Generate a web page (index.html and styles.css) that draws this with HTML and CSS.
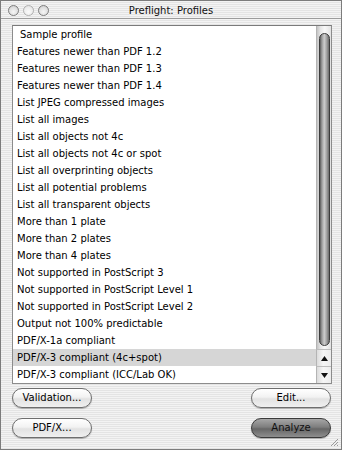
FILE: index.html
```html
<!DOCTYPE html>
<html>
<head>
<meta charset="utf-8">
<link rel="stylesheet" href="styles.css">
</head>
<body>
<div class="window">
  <div class="titlebar">
    <div class="lights">
      <span class="light"></span>
      <span class="light light-mid"></span>
      <span class="light"></span>
    </div>
    <div class="title">Preflight: Profiles</div>
    <div></div>
  </div>
  <div class="content">
    <div class="listbox">
      <ul class="list">
        <li class="row row-first">Sample profile</li>
        <li class="row">Features newer than PDF 1.2</li>
        <li class="row">Features newer than PDF 1.3</li>
        <li class="row">Features newer than PDF 1.4</li>
        <li class="row">List JPEG compressed images</li>
        <li class="row">List all images</li>
        <li class="row">List all objects not 4c</li>
        <li class="row">List all objects not 4c or spot</li>
        <li class="row">List all overprinting objects</li>
        <li class="row">List all potential problems</li>
        <li class="row">List all transparent objects</li>
        <li class="row">More than 1 plate</li>
        <li class="row">More than 2 plates</li>
        <li class="row">More than 4 plates</li>
        <li class="row">Not supported in PostScript 3</li>
        <li class="row">Not supported in PostScript Level 1</li>
        <li class="row">Not supported in PostScript Level 2</li>
        <li class="row">Output not 100% predictable</li>
        <li class="row">PDF/X-1a compliant</li>
        <li class="row row-selected">PDF/X-3 compliant (4c+spot)</li>
        <li class="row">PDF/X-3 compliant (ICC/Lab OK)</li>
      </ul>
      <div class="scrollbar">
        <div class="track"><div class="thumb"></div></div>
        <div class="arrow arrow-up">
          <svg width="7" height="5" viewBox="0 0 7 5"><polygon points="3.5,0 7,5 0,5" fill="#111"/></svg>
        </div>
        <div class="arrow arrow-down">
          <svg width="7" height="5" viewBox="0 0 7 5"><polygon points="0,0 7,0 3.5,5" fill="#111"/></svg>
        </div>
      </div>
    </div>
    <div class="buttons">
      <div class="col">
        <div class="btn">Validation...</div>
        <div class="btn">PDF/X...</div>
      </div>
      <div class="col">
        <div class="btn">Edit...</div>
        <div class="btn btn-default">Analyze</div>
      </div>
    </div>
  </div>
  <svg class="grip" width="10" height="10" viewBox="0 0 10 10">
    <line x1="9" y1="2" x2="2" y2="9" stroke="#9a9a9a" stroke-width="1"/>
    <line x1="9" y1="5" x2="5" y2="9" stroke="#9a9a9a" stroke-width="1"/>
    <line x1="9" y1="8" x2="8" y2="9" stroke="#9a9a9a" stroke-width="1"/>
  </svg>
</div>
</body>
</html>
```
FILE: styles.css
```css
html, body {
  margin: 0;
  padding: 0;
  background: #ffffff;
}

body {
  font-family: "DejaVu Sans", "Liberation Sans", sans-serif;
  font-size: 10px;
  color: #000;
}

.window {
  position: relative;
  width: 342px;
  height: 450px;
  box-sizing: border-box;
  border: 1px solid #7c7c7c;
  background: repeating-linear-gradient(180deg, #f3f3f3 0, #f3f3f3 1px, #e4e4e4 1px, #e4e4e4 2px);
  display: flex;
  flex-direction: column;
}

.titlebar {
  height: 17px;
  border-bottom: 1px solid #9c9c9c;
  display: grid;
  grid-template-columns: 1fr auto 1fr;
  align-items: center;
}

.lights {
  display: flex;
  gap: 4px;
  padding-left: 7px;
  align-items: center;
}

.light {
  width: 9px;
  height: 9px;
  border-radius: 50%;
  border: 1px solid #7d7d7d;
  background: radial-gradient(circle at 50% 65%, #f6f6f6 0, #dedede 60%, #bdbdbd 100%);
}

.light-mid {
  border-color: #b0b0b0;
  background: radial-gradient(circle at 50% 65%, #fafafa 0, #ececec 60%, #d6d6d6 100%);
}

.title {
  font-size: 10px;
  color: #111;
  line-height: 17px;
  padding-top: 1px;
}

.content {
  flex: 1;
  display: flex;
  flex-direction: column;
  padding: 6px 9px 0 11px;
}

.listbox {
  height: 357px;
  border: 1px solid #8c8c8c;
  border-top-color: #7a7a7a;
  background: #ffffff;
  display: flex;
}

.list {
  list-style: none;
  margin: 0;
  padding: 0;
  flex: 1;
}

.row {
  height: 17px;
  line-height: 17px;
  padding-left: 4px;
  white-space: nowrap;
  overflow: hidden;
}

.row-first {
  padding-left: 7px;
}

.row-selected {
  background: #d6d6d6;
}

.scrollbar {
  width: 15px;
  display: flex;
  flex-direction: column;
  background: #f2f2f2;
}

.track {
  flex: 1;
  padding: 7px 1px 3px 2px;
  display: flex;
  background: linear-gradient(90deg, #c4c4c4 0, #e6e6e6 25%, #f8f8f8 55%, #e2e2e2 100%);
  border-left: 1px solid #b4b4b4;
}

.thumb {
  flex: 1;
  border-radius: 6px;
  border: 1px solid #3c3c3c;
  background: linear-gradient(90deg, #5a5a5a 0, #8a8a8a 15%, #b8b8b8 35%, #c9c9c9 50%, #a9a9a9 70%, #6c6c6c 100%);
}

.arrow {
  height: 16px;
  display: flex;
  align-items: center;
  justify-content: center;
  border-left: 1px solid #b4b4b4;
  border-top: 1px solid #bdbdbd;
  background: linear-gradient(90deg, #dcdcdc 0, #f6f6f6 45%, #ececec 100%);
}

.buttons {
  display: flex;
  justify-content: space-between;
  padding-top: 4px;
  padding-right: 1px;
}

.col {
  display: flex;
  flex-direction: column;
  gap: 10px;
}

.btn {
  width: 78px;
  height: 18px;
  line-height: 18px;
  text-align: center;
  border: 1px solid #6e6e6e;
  border-radius: 10px;
  background: linear-gradient(180deg, #ffffff 0, #f2f2f2 45%, #e2e2e2 55%, #f0f0f0 100%);
  box-shadow: 0 1px 1px rgba(0, 0, 0, 0.25);
  color: #000;
}

.btn-default {
  border-color: #3a3a3a;
  background: linear-gradient(180deg, #a6a6a6 0, #7e7e7e 45%, #666666 55%, #8e8e8e 100%);
  color: #111;
}

.grip {
  position: absolute;
  right: 2px;
  bottom: 2px;
}
```
